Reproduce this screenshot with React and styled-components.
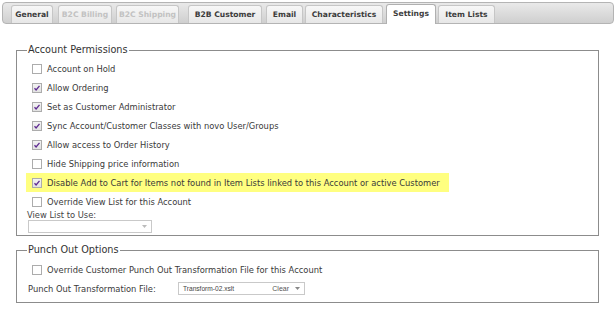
import React from 'react';
import styled, { createGlobalStyle } from 'styled-components';

const GlobalStyle = createGlobalStyle`
  html, body {
    margin: 0;
    padding: 0;
    background: #fff;
  }
  body {
    font-family: "DejaVu Sans", Verdana, sans-serif;
    font-size: 8.35px;
    color: #3a3a3a;
  }
`;

const Page = styled.div`
  width: 616px;
  height: 320px;
  padding-top: 2px;
  box-sizing: border-box;
  overflow: hidden;
`;

const TabBar = styled.div`
  height: 22px;
  margin: 0 2px;
  box-sizing: border-box;
  border: 1px solid #b4b4b4;
  border-radius: 4px;
  background: linear-gradient(#e9e9e9, #cfcfcf);
  display: flex;
  align-items: flex-end;
  padding-left: 7px;
`;

const Tab = styled.div`
  width: ${p => p.$w}px;
  margin-left: ${p => p.$gap}px;
  height: ${p => (p.$active ? 20 : 18)}px;
  margin-bottom: ${p => (p.$active ? -1 : 0)}px;
  box-sizing: border-box;
  border: 1px solid ${p => (p.$active ? '#b0b0b0' : '#c6c6c6')};
  border-bottom: none;
  border-radius: 3px 3px 0 0;
  background: ${p => (p.$active ? '#fff' : 'linear-gradient(#f7f7f7, #e7e7e7)')};
  color: ${p => (p.$disabled ? '#c2c2c2' : '#3d3d3d')};
  font-size: 7.6px;
  font-weight: bold;
  display: flex;
  align-items: center;
  justify-content: center;
  padding-bottom: ${p => (p.$active ? 2 : 0)}px;
  white-space: nowrap;
`;

const Fieldset = styled.fieldset`
  margin: ${p => p.$top}px 17px 0 16px;
  padding: ${p => p.$padTop}px 0 ${p => p.$padBottom}px 9px;
  border: 1px solid #8c8c8c;
  min-width: 0;
`;

const Legend = styled.legend`
  font-size: 9.7px;
  line-height: 12px;
  color: #333;
  padding: 0 1px;
  margin-left: 1px;
`;

const Row = styled.div`
  display: flex;
  align-items: center;
  width: fit-content;
  height: 19px;
  padding: 0 9px 0 6px;
  background: ${p => (p.$highlight ? '#ffff80' : 'transparent')};
`;

const Box = styled.span`
  width: 10px;
  height: 10px;
  box-sizing: border-box;
  border: 1px solid #acacac;
  background: ${p => (p.$checked ? 'linear-gradient(#f3f3f3, #e2e2e2)' : '#fff')};
  margin-right: 5px;
  display: flex;
  align-items: center;
  justify-content: center;
  flex: none;
`;

const Label = styled.span`
  white-space: nowrap;
  line-height: 10px;
`;

const SmallLabel = styled.div`
  line-height: 9px;
  padding-left: 1px;
  color: #444;
`;

const Select = styled.div`
  width: ${p => p.$w}px;
  height: 13px;
  box-sizing: border-box;
  border: 1px solid #c9c9c9;
  background: #fff;
  display: flex;
  align-items: center;
  padding: 0 4px;
  margin-left: ${p => p.$ml || 0}px;
`;

const SelectText = styled.span`
  flex: 1;
  font-family: "Liberation Sans", Arial, sans-serif;
  font-size: 6.6px;
  color: #444;
`;

const ClearText = styled.span`
  font-family: "Liberation Sans", Arial, sans-serif;
  font-size: 7px;
  color: #555;
  margin-right: 6px;
`;

const FileRow = styled.div`
  display: flex;
  align-items: center;
  height: 15px;
  margin-top: 2px;
`;

const FileLabel = styled.span`
  width: 150px;
  padding-left: 2px;
  white-space: nowrap;
`;

const Caret = ({ color = '#888' }) => (
  <svg width="5" height="3" viewBox="0 0 5 3">
    <path d="M0 0 L5 0 L2.5 3 Z" fill={color} />
  </svg>
);

const Checkbox = ({ checked }) => (
  <Box $checked={checked}>
    {checked && (
      <svg width="8" height="8" viewBox="0 0 8 8">
        <path d="M1.5 4.2 L3.1 5.9 L6.5 1.8" stroke="#5e2a92" strokeWidth="1.3" fill="none" />
      </svg>
    )}
  </Box>
);

const tabs = [
  { label: 'General', w: 42, gap: 1 },
  { label: 'B2C Billing', w: 54, gap: 5, disabled: true },
  { label: 'B2C Shipping', w: 63, gap: 4, disabled: true },
  { label: 'B2B Customer', w: 74, gap: 9 },
  { label: 'Email', w: 37, gap: 4 },
  { label: 'Characteristics', w: 78, gap: 2 },
  { label: 'Settings', w: 50, gap: 3, active: true },
  { label: 'Item Lists', w: 57, gap: 2 },
];

const permissions = [
  { label: 'Account on Hold', checked: false },
  { label: 'Allow Ordering', checked: true },
  { label: 'Set as Customer Administrator', checked: true },
  { label: 'Sync Account/Customer Classes with novo User/Groups', checked: true },
  { label: 'Allow access to Order History', checked: true },
  { label: 'Hide Shipping price information', checked: false },
  { label: 'Disable Add to Cart for Items not found in Item Lists linked to this Account or active Customer', checked: true, highlight: true },
  { label: 'Override View List for this Account', checked: false },
];

export default function App() {
  return (
    <Page>
      <GlobalStyle />
      <TabBar>
        {tabs.map(t => (
          <Tab key={t.label} $w={t.w} $gap={t.gap} $active={t.active} $disabled={t.disabled}>
            {t.label}
          </Tab>
        ))}
      </TabBar>

      <Fieldset $top={20} $padTop={3} $padBottom={2}>
        <Legend>Account Permissions</Legend>
        {permissions.map(p => (
          <Row key={p.label} $highlight={p.highlight}>
            <Checkbox checked={p.checked} />
            <Label>{p.label}</Label>
          </Row>
        ))}
        <SmallLabel>View List to Use:</SmallLabel>
        <Select $w={124} $ml={2}>
          <SelectText />
          <Caret color="#bbb" />
        </Select>
      </Fieldset>

      <Fieldset $top={8} $padTop={4} $padBottom={6}>
        <Legend>Punch Out Options</Legend>
        <Row>
          <Checkbox checked={false} />
          <Label>Override Customer Punch Out Transformation File for this Account</Label>
        </Row>
        <FileRow>
          <FileLabel>Punch Out Transformation File:</FileLabel>
          <Select $w={127}>
            <SelectText>Transform-02.xslt</SelectText>
            <ClearText>Clear</ClearText>
            <Caret />
          </Select>
        </FileRow>
      </Fieldset>
    </Page>
  );
}
